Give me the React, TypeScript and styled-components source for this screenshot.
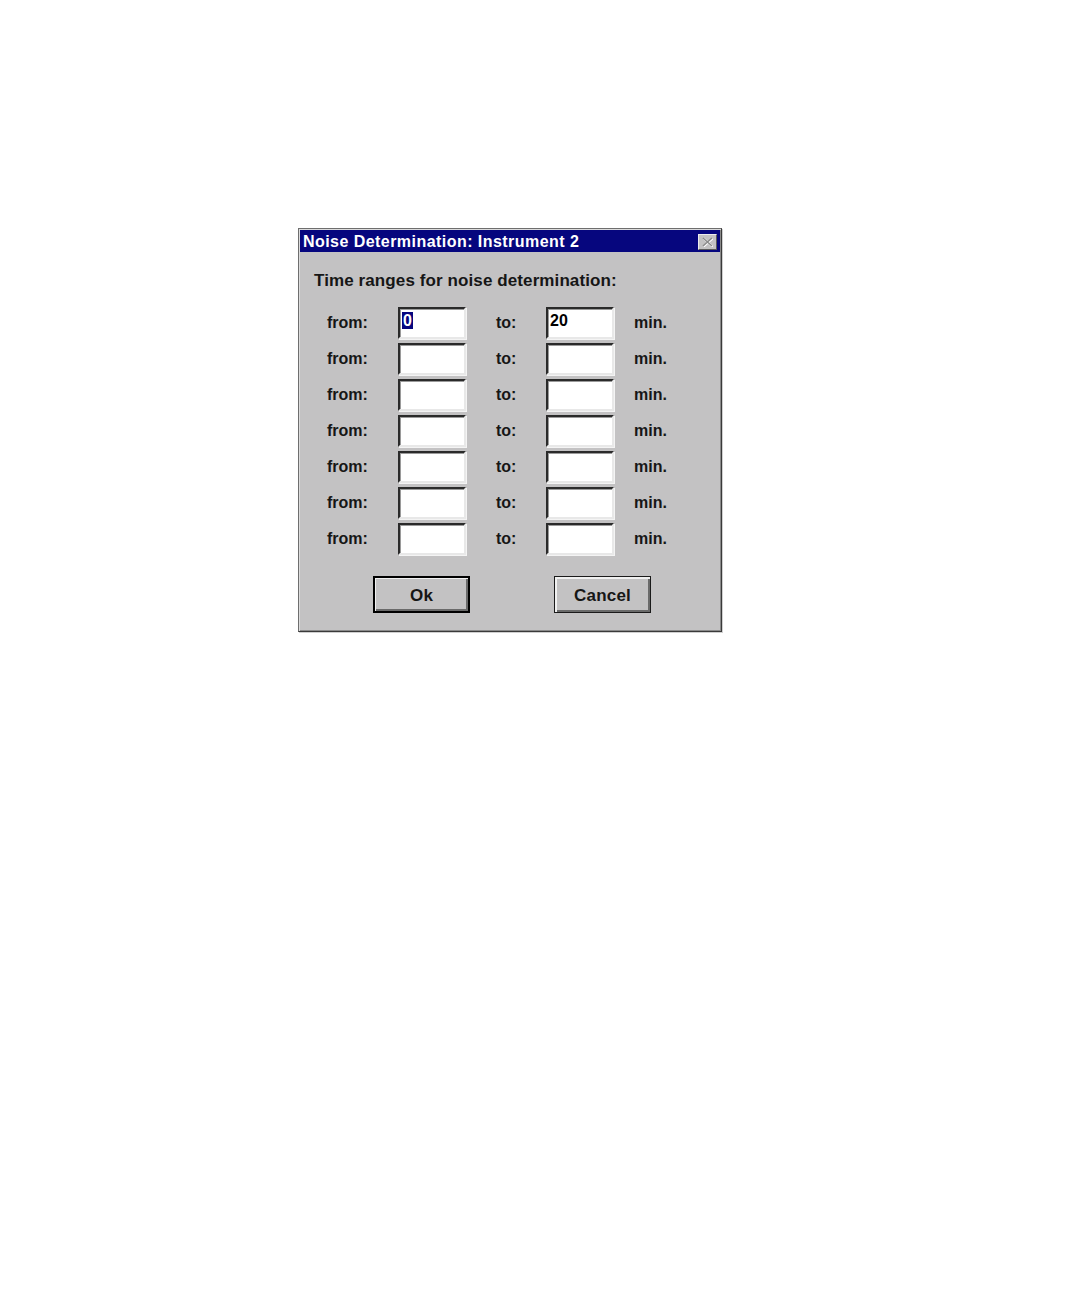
import React from 'react';
import styled, { createGlobalStyle } from 'styled-components';

const GlobalStyle = createGlobalStyle`
    html, body {
        margin: 0;
        padding: 0;
        background: #ffffff;
    }
    body {
        font-family: "Liberation Sans", Arial, sans-serif;
    }
`;

const Page = styled.div`
    width: 1080px;
    height: 1296px;
    padding: 228px 0 0 298px;
    box-sizing: border-box;
`;

const Window = styled.div`
    width: 424px;
    height: 404px;
    box-sizing: border-box;
    background: #c3c2c3;
    border: 1px solid #6e6e6e;
    border-right-color: #3a3a3a;
    border-bottom-color: #3a3a3a;
    box-shadow: inset 1px 1px 0 #dcdcdc, inset -1px -1px 0 #8a8a8a, 1px 1px 0 #d0d0d0;
    padding: 1px;
    display: flex;
    flex-direction: column;
`;

const TitleBar = styled.div`
    height: 22px;
    background: #06067e;
    display: flex;
    align-items: center;
    justify-content: space-between;
    padding: 1px 3px 0 3px;
    box-sizing: border-box;
`;

const Title = styled.span`
    color: #ffffff;
    font-size: 16px;
    font-weight: bold;
    letter-spacing: 0.45px;
`;

const CloseBox = styled.div`
    width: 19px;
    height: 16px;
    box-sizing: border-box;
    background: #c3c2c3;
    border: 1px solid #ececec;
    border-right-color: #5a5a5a;
    border-bottom-color: #5a5a5a;
    display: flex;
    align-items: center;
    justify-content: center;
`;

const Body = styled.div`
    padding: 17px 0 0 27px;
    display: flex;
    flex-direction: column;
`;

const Heading = styled.div`
    font-size: 17px;
    font-weight: bold;
    color: #161616;
    letter-spacing: 0.1px;
    margin-left: -13px;
    height: 22px;
    line-height: 22px;
    margin-top: 1px;
`;

const Rows = styled.div`
    margin-top: 15px;
    display: grid;
    grid-template-columns: 71px 68px 30px 50px 68px 20px auto;
    grid-auto-rows: 32px;
    row-gap: 4px;
    align-items: center;
`;

const Label = styled.span<{ $col: number }>`
    grid-column: ${p => p.$col};
    font-size: 16px;
    font-weight: bold;
    color: #161616;
    margin-top: -1px;
`;

const Field = styled.div<{ $col: number }>`
    grid-column: ${p => p.$col};
    height: 32px;
    box-sizing: border-box;
    background: #ffffff;
    border-top: 2px solid #2a2a2a;
    border-left: 2px solid #2a2a2a;
    border-right: 2px solid #e8e8e8;
    border-bottom: 2px solid #e8e8e8;
    box-shadow: inset 1px 1px 0 #9a9a9a, 1px 1px 0 #f4f4f4;
    padding: 2px 0 0 2px;
    font-size: 16px;
    font-weight: bold;
    color: #000000;
    line-height: 20px;
`;

const Selected = styled.span`
    background: #06067e;
    color: #ffffff;
    padding: 0 1px;
`;

const ButtonRow = styled.div`
    display: flex;
    gap: 84px;
    margin-top: 21px;
    padding-left: 46px;
`;

const Button = styled.div<{ $default?: boolean }>`
    width: 97px;
    height: 37px;
    box-sizing: border-box;
    background: #c3c2c3;
    border: ${p => (p.$default ? '2px solid #000000' : '1px solid #1a1a1a')};
    box-shadow: ${p =>
        p.$default
            ? 'inset 1px 1px 0 #f0f0f0, inset -2px -2px 0 #6a6a6a'
            : 'inset 2px 2px 0 #f0f0f0, inset -2px -2px 0 #6a6a6a'};
    display: flex;
    align-items: center;
    justify-content: center;
    padding-top: 2px;
    font-size: 17px;
    font-weight: bold;
    color: #161616;
    letter-spacing: 0.2px;
`;

const rows: Array<[string, string]> = [
    ['0', '20'],
    ['', ''],
    ['', ''],
    ['', ''],
    ['', ''],
    ['', ''],
    ['', ''],
];

export default function App() {
    return (
        <Page>
            <GlobalStyle />
            <Window>
                <TitleBar>
                    <Title>Noise Determination: Instrument 2</Title>
                    <CloseBox>
                        <svg width="11" height="10" viewBox="0 0 11 10">
                            <path d="M1 1 L10 9 M10 1 L1 9" stroke="#ffffff" strokeWidth="2" transform="translate(0.6,0.6)" />
                            <path d="M1 1 L10 9 M10 1 L1 9" stroke="#8a8a8a" strokeWidth="1.6" />
                        </svg>
                    </CloseBox>
                </TitleBar>
                <Body>
                    <Heading>Time ranges for noise determination:</Heading>
                    <Rows>
                        {rows.map(([from, to], i) => (
                            <React.Fragment key={i}>
                                <Label $col={1}>from:</Label>
                                <Field $col={2}>{from && <Selected>{from}</Selected>}</Field>
                                <Label $col={4}>to:</Label>
                                <Field $col={5}>{to}</Field>
                                <Label $col={7}>min.</Label>
                            </React.Fragment>
                        ))}
                    </Rows>
                    <ButtonRow>
                        <Button $default>Ok</Button>
                        <Button>Cancel</Button>
                    </ButtonRow>
                </Body>
            </Window>
        </Page>
    );
}
